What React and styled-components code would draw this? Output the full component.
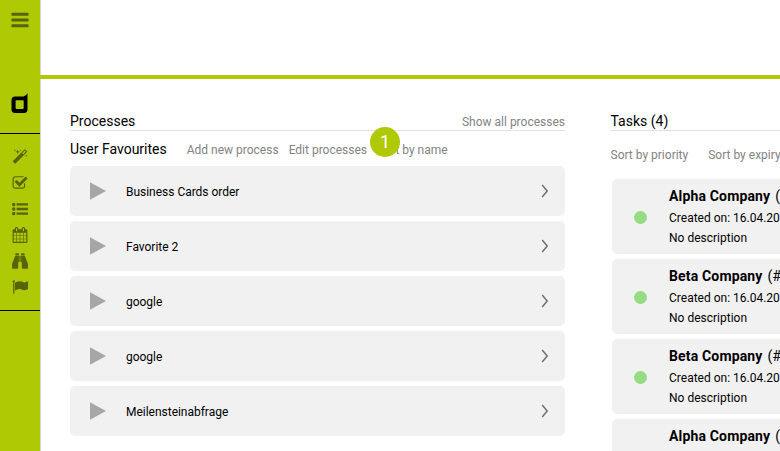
import React from "react";
import styled, { createGlobalStyle } from "styled-components";

const Global = createGlobalStyle`
  * { box-sizing: border-box; }
  html, body { margin: 0; height: 100%; overflow: hidden; background: #fff; }
  body { font-family: Roboto, sans-serif; font-size: 12px; color: #000; }
`;

const Page = styled.div`
  display: flex;
  width: 780px;
  height: 451px;
  overflow: hidden;
`;

const Sidebar = styled.nav`
  flex: 0 0 40px;
  display: flex;
  flex-direction: column;
  align-items: center;
  background: #afc905;
  color: #57650a;
  box-shadow: 1px 0 1px rgba(0, 0, 0, 0.15);
`;

const MenuButton = styled.div`
  height: 92px;
  padding-top: 10px;
`;

const LogoBox = styled.div`
  height: 41px;
`;

const NavGroup = styled.div`
  width: 40px;
  height: 178px;
  padding-top: 15px;
  border-top: 1px solid #000;
  border-bottom: 1px solid #000;
  display: flex;
  flex-direction: column;
  align-items: center;
  gap: 10px;
`;

const Icon = styled.svg`
  display: block;
  flex: none;
  width: ${(p) => p.$size || 16}px;
  height: ${(p) => p.$size || 16}px;
  fill: currentColor;
`;

const PlayIcon = styled(Icon)`
  height: 18px;
`;

const Content = styled.div`
  flex: 1;
  min-width: 0;
`;

const Header = styled.header`
  height: 79px;
  border-bottom: 4px solid #afc905;
`;

const Columns = styled.main`
  display: flex;
  gap: 45px;
  padding: 32px 0 0 30px;
`;

const Column = styled.section`
  flex: 0 0 ${(p) => p.$width}px;
`;

const ColumnHead = styled.div`
  display: flex;
  justify-content: space-between;
  align-items: baseline;
  height: 20px;
  padding-left: ${(p) => p.$inset || 0}px;
  line-height: 20px;
  border-bottom: 1px solid #e2e2e2;
`;

const Title = styled.h2`
  margin: 0;
  font-size: 14px;
  font-weight: 400;
  white-space: nowrap;
`;

const Action = styled.span`
  position: relative;
  color: #838383;
  font-size: 12px;
  white-space: nowrap;
`;

const Toolbar = styled.div`
  display: flex;
  align-items: baseline;
  gap: ${(p) => p.$gap}px;
  height: ${(p) => p.$height}px;
  padding: ${(p) => p.$top}px 0 0 ${(p) => p.$inset || 0}px;
  line-height: 18px;

  ${Title} { margin-right: 10px; }
`;

const Marker = styled.span`
  position: absolute;
  left: -7px;
  top: -14px;
  width: 30px;
  height: 30px;
  border-radius: 50%;
  background: #afc905;
  color: #fff;
  font-size: 18px;
  line-height: 29px;
  text-align: center;
`;

const List = styled.div`
  display: flex;
  flex-direction: column;
  gap: 5px;
`;

const ProcessRow = styled.div`
  display: flex;
  align-items: center;
  height: 50px;
  padding: 0 13px 0 20px;
  border-radius: 5px;
  background: #f1f1f1;
`;

const ProcessName = styled.span`
  flex: 1;
  padding: 1px 0 0 20px;
  letter-spacing: -0.02px;
`;

const TaskRow = styled.div`
  display: flex;
  align-items: center;
  height: 75px;
  margin-left: 2px;
  padding-left: 22px;
  border-radius: 5px;
  background: #f1f1f1;
`;

const Dot = styled.span`
  flex: none;
  width: 13px;
  height: 13px;
  margin: 1px 22px 0 0;
  border-radius: 50%;
  background: #95dc82;
`;

const TaskText = styled.div`
  white-space: nowrap;
  line-height: 20px;
`;

const Company = styled.div`
  height: 22px;
  font-size: 14px;
  line-height: 20px;

  b {
    font-weight: 700;
    letter-spacing: 0.16px;
    margin-right: 1.5px;
  }
`;

const paths = {
  bars: "M1664 1344v128q0 26-19 45t-45 19h-1408q-26 0-45-19t-19-45v-128q0-26 19-45t45-19h1408q26 0 45 19t19 45zm0-512v128q0 26-19 45t-45 19h-1408q-26 0-45-19t-19-45v-128q0-26 19-45t45-19h1408q26 0 45 19t19 45zm0-512v128q0 26-19 45t-45 19h-1408q-26 0-45-19t-19-45v-128q0-26 19-45t45-19h1408q26 0 45 19t19 45z",
  magic: "M1254 581l293-293-107-107-293 293zm447-293q0 27-18 45l-1286 1286q-18 18-45 18t-45-18l-198-198q-18-18-18-45t18-45l1286-1286q18-18 45-18t45 18l198 198q18 18 18 45zm-1351-190l98 30-98 30-30 98-30-98-98-30 98-30 30-98zm350 162l196 60-196 60-60 196-60-196-196-60 196-60 60-196zm930 478l98 30-98 30-30 98-30-98-98-30 98-30 30-98zm-640-640l98 30-98 30-30 98-30-98-98-30 98-30 30-98z",
  check: "M1472 930v318q0 119-84.5 203.5t-203.5 84.5h-832q-119 0-203.5-84.5t-84.5-203.5v-832q0-119 84.5-203.5t203.5-84.5h832q63 0 117 25 15 7 18 23 3 17-9 29l-49 49q-10 10-23 10-3 0-9-2-23-6-45-6h-832q-66 0-113 47t-47 113v832q0 66 47 113t113 47h832q66 0 113-47t47-113v-254q0-13 9-22l64-64q10-10 23-10 6 0 12 3 20 8 20 29zm231-489l-814 814q-24 24-57 24t-57-24l-430-430q-24-24-24-57t24-57l110-110q24-24 57-24t57 24l263 263 647-647q24-24 57-24t57 24l110 110q24 24 24 57t-24 57z",
  list: "M384 1408q0 80-56 136t-136 56-136-56-56-136 56-136 136-56 136 56 56 136zm0-512q0 80-56 136t-136 56-136-56-56-136 56-136 136-56 136 56 56 136zm1408 416v192q0 13-9.5 22.5t-22.5 9.5h-1216q-13 0-22.5-9.5t-9.5-22.5v-192q0-13 9.5-22.5t22.5-9.5h1216q13 0 22.5 9.5t9.5 22.5zm-1408-928q0 80-56 136t-136 56-136-56-56-136 56-136 136-56 136 56 56 136zm1408 416v192q0 13-9.5 22.5t-22.5 9.5h-1216q-13 0-22.5-9.5t-9.5-22.5v-192q0-13 9.5-22.5t22.5-9.5h1216q13 0 22.5 9.5t9.5 22.5zm0-512v192q0 13-9.5 22.5t-22.5 9.5h-1216q-13 0-22.5-9.5t-9.5-22.5v-192q0-13 9.5-22.5t22.5-9.5h1216q13 0 22.5 9.5t9.5 22.5z",
  calendar: "M192 1664h288v-288h-288v288zm352 0h320v-288h-320v288zm-352-352h288v-320h-288v320zm352 0h320v-320h-320v320zm-352-384h288v-288h-288v288zm736 736h320v-288h-320v288zm-384-736h320v-288h-320v288zm768 736h288v-288h-288v288zm-384-352h320v-320h-320v320zm-352-864v-288q0-13-9.5-22.5t-22.5-9.5h-64q-13 0-22.5 9.5t-9.5 22.5v288q0 13 9.5 22.5t22.5 9.5h64q13 0 22.5-9.5t9.5-22.5zm736 864h288v-320h-288v320zm-384-384h320v-288h-320v288zm384 0h288v-288h-288v288zm32-480v-288q0-13-9.5-22.5t-22.5-9.5h-64q-13 0-22.5 9.5t-9.5 22.5v288q0 13 9.5 22.5t22.5 9.5h64q13 0 22.5-9.5t9.5-22.5zm384-64v1280q0 52-38 90t-90 38h-1408q-52 0-90-38t-38-90v-1280q0-52 38-90t90-38h128v-96q0-66 47-113t113-47h64q66 0 113 47t47 113v96h384v-96q0-66 47-113t113-47h64q66 0 113 47t47 113v96h128q52 0 90 38t38 90z",
  flag: "M320 256q0 72-64 110v1266q0 13-9.5 22.5t-22.5 9.5h-64q-13 0-22.5-9.5t-9.5-22.5v-1266q-64-38-64-110 0-53 37.5-90.5t90.5-37.5 90.5 37.5 37.5 90.5zm1472 64v763q0 25-12.5 38.5t-39.5 27.5q-215 116-369 116-61 0-123.5-22t-108.5-48-115.5-48-142.5-22q-192 0-464 146-17 9-33 9-26 0-45-19t-19-45v-742q0-32 31-55 21-14 79-43 236-120 421-120 107 0 200 29t219 88q38 19 88 19 54 0 117.5-21t110-47 88-47 54.5-21q26 0 45 19t19 45z",
};

const Glyph = ({ name, size }) => (
  <Icon viewBox="0 0 1792 1792" $size={size}>
    <path d={paths[name]} />
  </Icon>
);

const processes = ["Business Cards order", "Favorite 2", "google", "google", "Meilensteinabfrage"];
const tasks = [
  ["Alpha Company", "(#1204)"],
  ["Beta Company", "(#1203)"],
  ["Beta Company", "(#1202)"],
  ["Alpha Company", "(#1201)"],
];

export default function App() {
  return (
    <Page>
      <Global />
      <Sidebar>
        <MenuButton>
          <Glyph name="bars" size={20} />
        </MenuButton>
        <LogoBox>
          <Icon viewBox="0 0 22 22" $size={22} color="#000">
            <path
              fillRule="evenodd"
              d="M18.500 1v16.500q0 3.400-3.400 3.400H6Q2.500 20.900 2.500 17.500V8Q2.500 4.500 6 4.500h8.500q2.800-.4 4-3.500zM7.400 8.200q-.8 0-.8.800v7.100q0 .8.800.8h6.500q.8 0 .8-.8V9q0-.8-.8-.8z"
            />
          </Icon>
        </LogoBox>
        <NavGroup>
          <Glyph name="magic" />
          <Glyph name="check" />
          <Glyph name="list" />
          <Glyph name="calendar" />
          <Icon viewBox="0 0 16 16">
            <path d="M3.800.3h2.700q.4 0 .4.400v1.500h-3.500V.7q0-.4.400-.4zM9.500.3h2.700q.4 0 .4.400v1.500H9.100V.7q0-.4.400-.4zM3.200 2.800h3.700v6.100q-.7.300-.7 1v5.200q0 .6-.6.600H.6q-.6 0-.6-.6v-4.100zM12.800 2.800H9.100v6.100q.7.300.7 1v5.200q0 .6.600.6h5q.6 0 .6-.6v-4.100zM7.300 2.800h1.400v6H7.300z" />
          </Icon>
          <Glyph name="flag" />
        </NavGroup>
      </Sidebar>
      <Content>
        <Header />
        <Columns>
          <Column $width={495}>
            <ColumnHead>
              <Title>Processes</Title>
              <Action>Show all processes</Action>
            </ColumnHead>
            <Toolbar $gap={10} $height={35} $top={9}>
              <Title>User Favourites</Title>
              <Action>Add new process</Action>
              <Action>Edit processes</Action>
              <Action>
                Sort by name
                <Marker>1</Marker>
              </Action>
            </Toolbar>
            <List>
              {processes.map((name, i) => (
                <ProcessRow key={i}>
                  <PlayIcon viewBox="0 0 16 18" color="#a6a6a6">
                    <path d="M0 0.200 16 9 0 17.800z" />
                  </PlayIcon>
                  <ProcessName>{name}</ProcessName>
                  <Icon viewBox="0 0 14 14" $size={14}>
                    <path d="M4.200 1 9.200 7 4.200 13" fill="none" stroke="#707070" strokeWidth="1.500" />
                  </Icon>
                </ProcessRow>
              ))}
            </List>
          </Column>
          <Column $width={495}>
            <ColumnHead $inset={0.5}>
              <Title>Tasks (4)</Title>
            </ColumnHead>
            <Toolbar $gap={20} $height={48} $top={15} $inset={0.5}>
              <Action>Sort by priority</Action>
              <Action>Sort by expiry</Action>
            </Toolbar>
            <List>
              {tasks.map(([company, id], i) => (
                <TaskRow key={i}>
                  <Dot />
                  <TaskText>
                    <Company>
                      <b>{company}</b> {id}
                    </Company>
                    <div>Created on: 16.04.2018</div>
                    <div>No description</div>
                  </TaskText>
                </TaskRow>
              ))}
            </List>
          </Column>
        </Columns>
      </Content>
    </Page>
  );
}
